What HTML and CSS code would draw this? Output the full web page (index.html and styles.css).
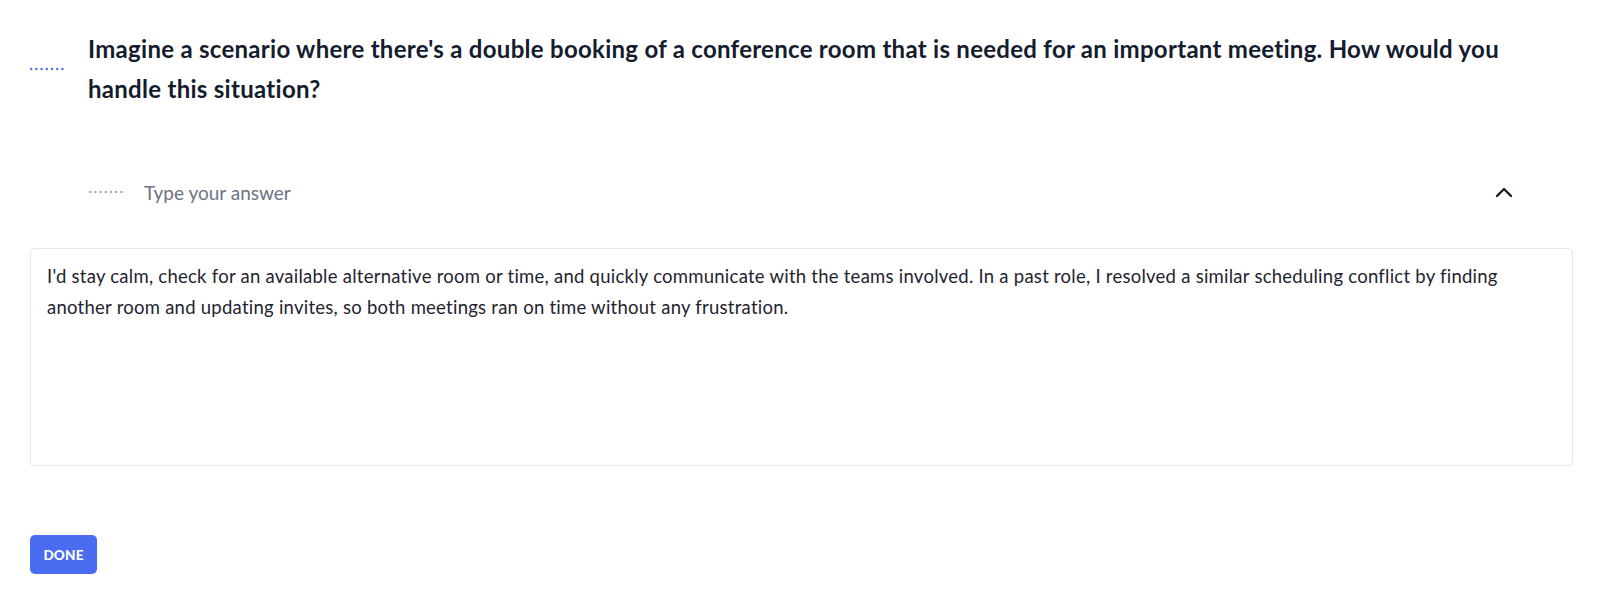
FILE: index.html
```html
<!DOCTYPE html>
<html lang="en">
<head>
<meta charset="utf-8">
<title>Question</title>
<link rel="stylesheet" href="styles.css">
</head>
<body>
<div class="page">
  <div class="question">
    <svg class="q-dots" width="34" height="4" viewBox="0 0 34 4">
      <circle cx="1.2" cy="2" r="1.2"/><circle cx="6.4" cy="2" r="1.2"/><circle cx="11.6" cy="2" r="1.2"/><circle cx="16.8" cy="2" r="1.2"/><circle cx="22" cy="2" r="1.2"/><circle cx="27.2" cy="2" r="1.2"/><circle cx="32.4" cy="2" r="1.2"/>
    </svg>
    <h2 class="q-text">Imagine a scenario where there's a double booking of a conference room that is needed for an important meeting. How would you handle this situation?</h2>
  </div>
  <div class="answer-head">
    <svg class="a-dots" width="34" height="4" viewBox="0 0 34 4">
      <circle cx="1.2" cy="2" r="1.1"/><circle cx="6.4" cy="2" r="1.1"/><circle cx="11.6" cy="2" r="1.1"/><circle cx="16.8" cy="2" r="1.1"/><circle cx="22" cy="2" r="1.1"/><circle cx="27.2" cy="2" r="1.1"/><circle cx="32.4" cy="2" r="1.1"/>
    </svg>
    <span class="a-label">Type your answer</span>
    <svg class="chevron" width="18" height="12" viewBox="0 0 18 12">
      <polyline points="2,10 9,3 16,10" fill="none" stroke="#111827" stroke-width="2.4" stroke-linecap="round" stroke-linejoin="round"/>
    </svg>
  </div>
  <div class="answer-box">I'd stay calm, check for an available alternative room or time, and quickly communicate with the teams involved. In a past role, I resolved a similar scheduling conflict by finding another room and updating invites, so both meetings ran on time without any frustration.</div>
  <button class="done">DONE</button>
</div>
</body>
</html>
```
FILE: styles.css
```css
html, body {
  margin: 0;
  padding: 0;
  background: #ffffff;
}
body {
  font-family: "Lato", "Noto Sans", sans-serif;
  color: #1f2937;
}
.page {
  padding: 29px 27px 0 30px;
  display: flex;
  flex-direction: column;
  align-items: stretch;
}
.question {
  display: flex;
  align-items: center;
  gap: 24px;
}
.q-dots {
  flex: none;
  fill: #4a6cf0;
}
.q-text {
  margin: 0;
  font-size: 24px;
  font-weight: 700;
  letter-spacing: 0.28px;
  line-height: 40px;
  color: #141c2e;
  padding-right: 60px;
}
.answer-head {
  margin-top: 63px;
  height: 40px;
  display: flex;
  align-items: center;
  padding-left: 59px;
  padding-right: 60px;
}
.a-dots {
  flex: none;
  fill: #8a93a3;
}
.a-label {
  margin-left: 21px;
  font-size: 19px;
  color: #6b7385;
  flex: 1;
}
.chevron {
  flex: none;
}
.answer-box {
  margin-top: 36px;
  height: 218px;
  box-sizing: border-box;
  border: 1.5px solid #e2e6f0;
  border-radius: 4px;
  padding: 12px 16px;
  font-size: 18.5px;
  letter-spacing: 0.25px;
  line-height: 31px;
  color: #1f2430;
}
.done {
  margin-top: 69px;
  align-self: flex-start;
  width: 67px;
  height: 39px;
  border: none;
  border-radius: 5px;
  background: #4a6cf0;
  color: #ffffff;
  font-family: "Lato", sans-serif;
  font-weight: 900;
  font-size: 13.5px;
  letter-spacing: 0.2px;
  padding: 0;
}
```
